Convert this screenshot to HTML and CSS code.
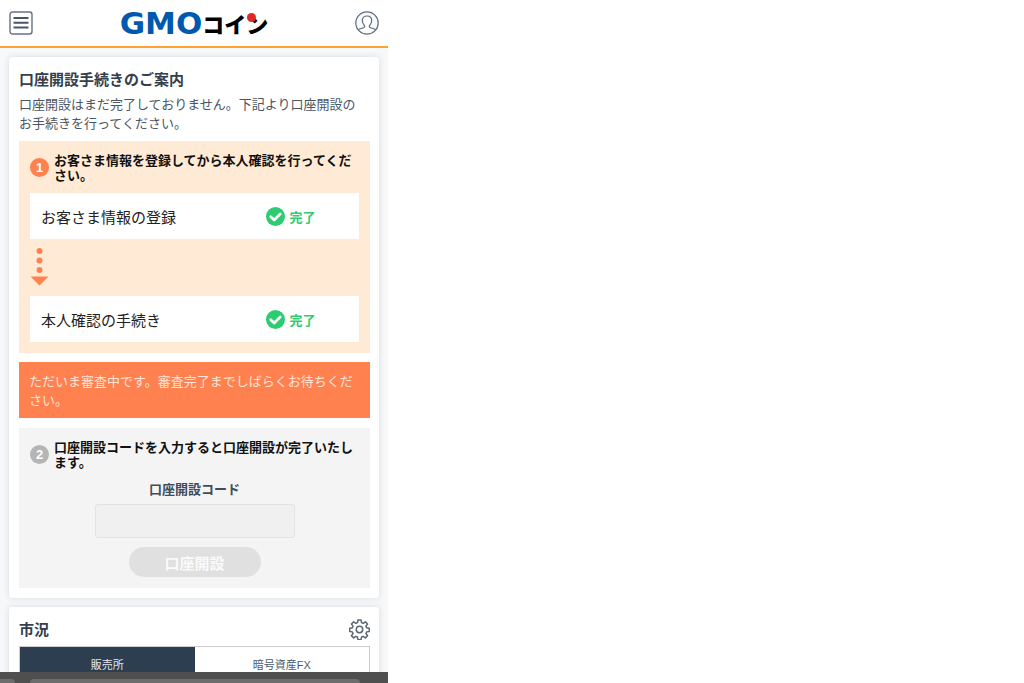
FILE: index.html
```html
<!DOCTYPE html>
<html lang="ja">
  <head>
    <meta charset="utf-8">
    <meta name="viewport" content="width=device-width, initial-scale=1">
    <title>GMOコイン</title>
    <link rel="stylesheet" href="styles.css">
  </head>
  <body>
    <div class="app">
      <header class="header">
        <button type="button" class="icon-button" aria-label="メニュー">
          <svg width="24" height="24" viewBox="0 0 24 24" fill="none" stroke="#4a5666">
            <rect x="1" y="1" width="22" height="22" rx="2.5" stroke="#667180" stroke-width="1.4"/>
            <path d="M4.5 7h15M4.5 11.8h15M4.5 16.5h15" stroke-width="1.9"/>
          </svg>
        </button>
        <a href="#" class="logo"><span class="logo-gmo">GMO</span><span class="logo-coin">コイ<span class="logo-n">ン</span></span></a>
        <button type="button" class="icon-button" aria-label="マイページ">
          <svg width="24" height="24" viewBox="0 0 24 24" fill="none" stroke="#5f6c7a" stroke-width="1.2">
            <circle cx="12" cy="12" r="11.2" fill="#f7f9fb"/>
            <path fill="#fff" d="M3.2 18.9c1.500-1.200 3.700-1.500 5.300-2.100 1.300-.5 1.500-1.300.8-2.500C8.200 12.900 7.300 11.400 7.300 9.500 7.300 6.800 9.300 5 12 5s4.700 1.800 4.700 4.500c0 1.900-.9 3.400-2 4.800-.7 1.200-.5 2 .8 2.500 1.600.6 3.800.9 5.300 2.100"/>
          </svg>
        </button>
      </header>

      <main class="main">
        <section class="card">
          <h1 class="card-title">口座開設手続きのご案内</h1>
          <p class="lead">口座開設はまだ完了しておりません。下記より口座開設のお手続きを行ってください。</p>

          <div class="step">
            <div class="step-head">
              <span class="step-number">1</span>
              <h2 class="step-title">お客さま情報を登録してから本人確認を行ってください。</h2>
            </div>
            <div class="task">
              <span>お客さま情報の登録</span>
              <span class="done">
                <svg width="19" height="19" viewBox="0 0 19 19">
                  <circle cx="9.5" cy="9.5" r="9.5" fill="#2ecc71"/>
                  <path d="M4.700 9.700l3.500 3.300 6-6" fill="none" stroke="#fff" stroke-width="2.700" stroke-linecap="round" stroke-linejoin="round"/>
                </svg>
                完了
              </span>
            </div>
            <svg class="arrow" width="19" height="38" viewBox="0 0 19 38" fill="#ff814f">
              <circle cx="9.500" cy="3" r="3"/>
              <circle cx="9.500" cy="12.500" r="3"/>
              <circle cx="9.500" cy="22" r="3"/>
              <path d="M.5 28.500h18l-9 9z"/>
            </svg>
            <div class="task">
              <span>本人確認の手続き</span>
              <span class="done">
                <svg width="19" height="19" viewBox="0 0 19 19">
                  <circle cx="9.5" cy="9.5" r="9.5" fill="#2ecc71"/>
                  <path d="M4.700 9.700l3.500 3.300 6-6" fill="none" stroke="#fff" stroke-width="2.700" stroke-linecap="round" stroke-linejoin="round"/>
                </svg>
                完了
              </span>
            </div>
          </div>

          <p class="notice">ただいま審査中です。審査完了までしばらくお待ちください。</p>

          <form class="step step-disabled" action="#">
            <div class="step-head">
              <span class="step-number">2</span>
              <h2 class="step-title">口座開設コードを入力すると口座開設が完了いたします。</h2>
            </div>
            <label class="code-label" for="code">口座開設コード</label>
            <input class="code-input" type="text" id="code" name="code" disabled>
            <button class="code-submit" type="submit" disabled>口座開設</button>
          </form>
        </section>

        <section class="card">
          <div class="card-head">
            <h2 class="card-title">市況</h2>
            <button type="button" class="icon-button" aria-label="設定">
              <svg width="21" height="21" viewBox="0 0 24 24" fill="none" stroke="#5a6674" stroke-width="1.700" stroke-linejoin="round">
                <circle cx="12" cy="12" r="3.700"/>
                <path d="M10.200 1.200h3.600l.5 3 1.900.8 2.500-1.800 2.500 2.500-1.800 2.500.8 1.900 3 .5v3.600l-3 .5-.8 1.900 1.800 2.500-2.500 2.500-2.500-1.800-1.900.8-.5 3h-3.600l-.5-3-1.900-.8-2.500 1.800-2.500-2.500 1.800-2.500-.8-1.900-3-.5v-3.600l3-.5.8-1.900-1.800-2.500 2.500-2.500 2.500 1.800 1.900-.8z"/>
              </svg>
            </button>
          </div>
          <div class="tabs">
            <button type="button" class="tab tab-active">販売所</button>
            <button type="button" class="tab">暗号資産FX</button>
          </div>
        </section>
      </main>

      <div class="toolbar">
        <span class="toolbar-side"></span>
        <span class="toolbar-field"></span>
      </div>
    </div>
  </body>
</html>
```

FILE: styles.css
```css
* { box-sizing: border-box; }
body { margin: 0; background: #fff; color: #4a5664; font-family: "Noto Sans CJK JP", sans-serif; font-size: 13px; line-height: 19px; }
h1, h2, p { margin: 0; }
button { font-family: inherit; }
svg { display: block; flex: none; }

.app { display: flex; flex-direction: column; width: 100%; max-width: 388px; height: 100vh; background: #f7f8fa; }

/* header */
.header { display: flex; flex: none; align-items: center; justify-content: space-between; height: 48px; padding: 0 9px; background: #fff; border-bottom: 2px solid #ffa22f; }
.icon-button { padding: 0; border: 0; background: none; }
.logo { display: flex; align-items: center; line-height: 24px; text-decoration: none; }
.logo-gmo { color: #0059ae; font-family: "DejaVu Sans", sans-serif; font-size: 31px; font-weight: bold; }
.logo-coin { color: #000; font-size: 22px; font-weight: 900; }
.logo-n { position: relative; }
.logo-n::before { content: ""; position: absolute; top: 6px; left: 1px; width: 9px; height: 9px; border-radius: 50%; background: #dd2a26; }

/* cards */
.main { display: flex; flex: 1; flex-direction: column; gap: 9px; min-height: 0; padding: 9px 9px 0; overflow-y: auto; scrollbar-width: none; }
.card { flex: none; padding: 12px 9px 10px 10px; background: #fff; border-radius: 3px; box-shadow: 0 0 6px rgba(44, 62, 80, 0.16); }
.card-head { display: flex; align-items: center; justify-content: space-between; height: 20px; }
.card-title { color: #34404d; font-size: 15px; line-height: 20px; }
.lead { margin: 5px 0 9px; padding-right: 10px; }

/* steps */
.step { padding: 11px; background: #ffebd5; }
.step-head { display: flex; align-items: center; gap: 5px; }
.step-number { flex: none; width: 19px; height: 19px; border-radius: 50%; background: #ff814f; color: #fff; font-family: "Liberation Sans", sans-serif; font-weight: bold; text-align: center; }
.step-title { color: #111; font-size: 13px; line-height: 15px; }
.task { display: grid; grid-template-columns: 69% 1fr; align-items: center; height: 46px; padding: 0 0 0 11px; background: #fff; color: #222; font-size: 15px; }
.step-head + .task { margin-top: 11px; }
.task .done { display: flex; align-items: center; gap: 4px; padding-left: 6px; color: #2ecc71; font-size: 13px; font-weight: bold; }
.arrow { margin: 9px 0 10px; }
.notice { margin: 9px 0 10px; padding: 9px 9px 9px 10px; background: #ff814f; color: #ffe3d6; }

.step-disabled { display: flex; flex-direction: column; align-items: center; background: #f4f4f4; }
.step-disabled .step-number { background: #b5b5b5; }
.code-label { margin: 10px 0 6px; color: #3f4c5a; font-weight: bold; }
.code-input { width: 200px; max-width: 100%; height: 34px; padding: 0 8px; border: 1px solid #e2e2e2; border-radius: 3px; background: #f0f0f0; font-size: 15px; }
.code-submit { width: 132px; height: 30px; margin-top: 9px; padding: 0; border: 0; border-radius: 15px; background: #e0e0e0; color: #fafafa; font-size: 15px; font-weight: bold; }

/* market tabs */
.tabs { display: flex; margin-top: 7px; border: 1px solid #ccc; }
.tab { flex: 1; height: 33px; padding: 0; border: 0; background: #fff; color: #4f5b68; font-family: "Liberation Sans", "Noto Sans CJK JP", sans-serif; font-size: 11px; }
.tab-active { background: #2c3e50; color: #e4e8ec; }

/* browser toolbar */
.toolbar { display: flex; flex: none; align-items: flex-end; gap: 15px; height: 11px; padding-right: 28px; background: #4f4f4f; }
.toolbar-side { width: 15px; height: 4px; border-radius: 0 10px 0 0; background: #6d6d6d; }
.toolbar-field { flex: 1; height: 4px; border-radius: 10px 10px 0 0; background: #6d6d6d; }
```
